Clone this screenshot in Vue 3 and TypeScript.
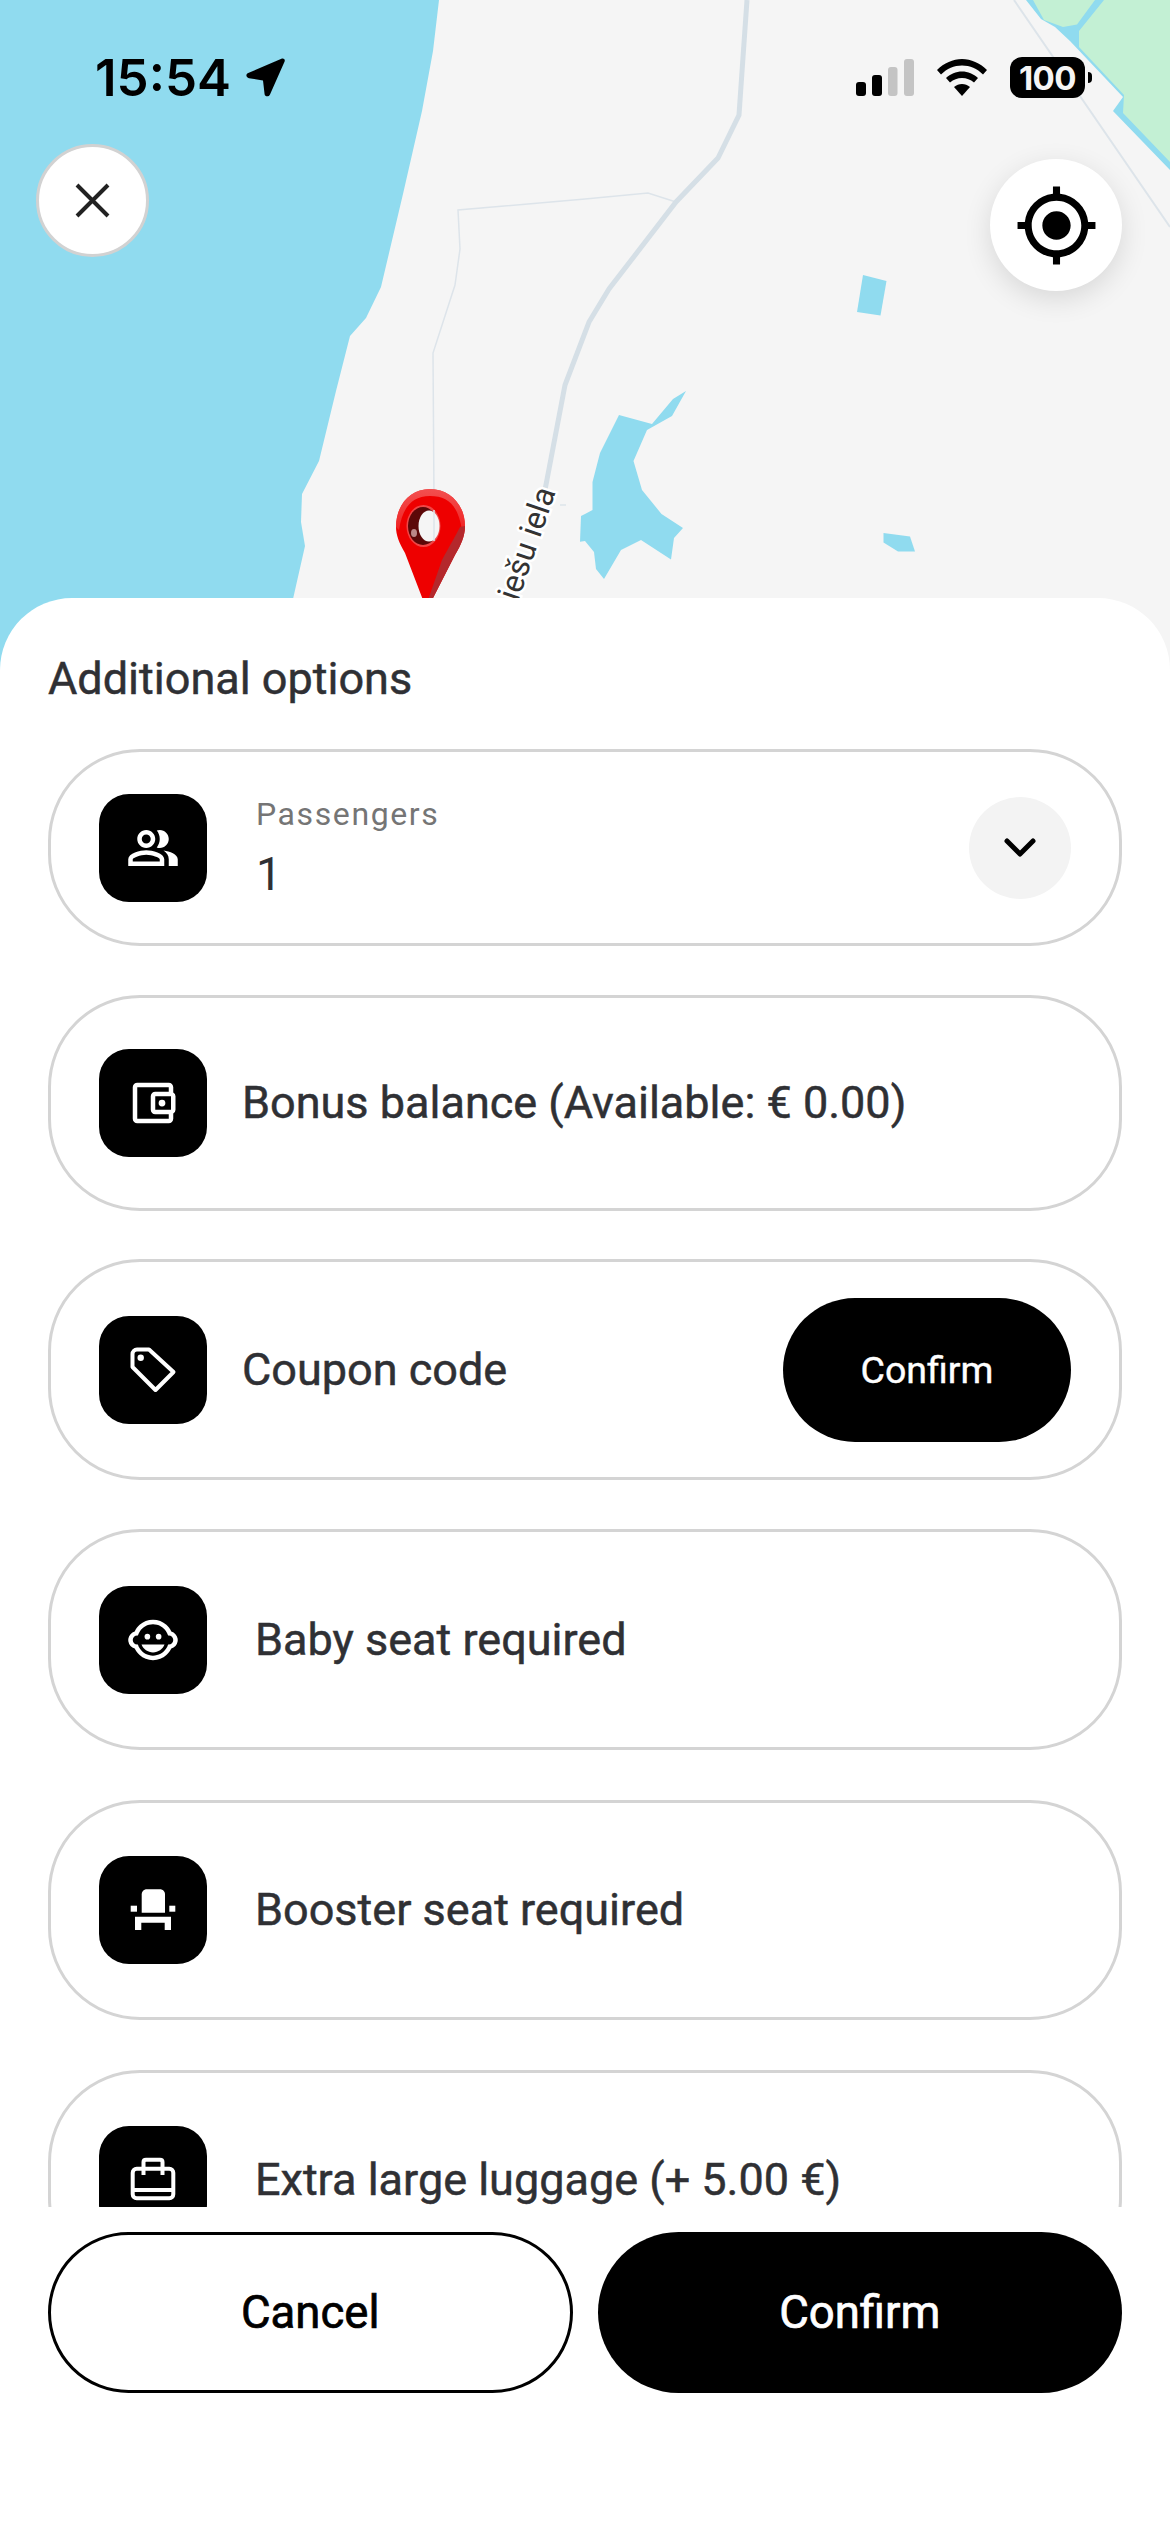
<script setup lang="ts">
const title: string = 'Additional options'
</script>

<template>
  <div class="screen">
    <svg class="map" width="1170" height="700" viewBox="0 0 1170 700">
      <defs>
        <linearGradient id="pinTop" x1="0" y1="0" x2="0" y2="1">
          <stop offset="0" stop-color="#f46a6a" />
          <stop offset="1" stop-color="#ef2f2f" />
        </linearGradient>
      </defs>
      <rect width="1170" height="700" fill="#f5f5f5" />
      <polygon fill="#90dbef" points="0,0 439,0 433,51 422,111 403,194 381,287 366,318 350,336 336,391 319,461 302,494 301,522 305,546 293,599 280,700 0,700" />
      <polygon fill="#90dbef" points="619,415 652,424 673,399 686,391 672,416 647,430 633.5,461 642,490 661.5,514 683,528 674,538 671,559.5 641,540 621,550 604,579 596,569 594,552 585,541 580,541.7 581,516 585,514 592.5,510 592.5,482 600,453" />
      <polygon fill="#90dbef" points="863,275 886.5,281 880.5,315.5 857,312" />
      <polygon fill="#90dbef" points="883.5,533 910,536.6 915,551.6 898,551.6 883.5,542.5" />
      <line x1="1014" y1="0" x2="1170" y2="227" stroke="#dde4ea" stroke-width="2" />
      <polygon fill="#90dbef" points="1026,0 1041,19 1055,27 1070,41 1123,97 1113,111 1170,170 1170,0" />
      <polygon fill="#c3f0d4" points="1033,0 1044,20 1063,27 1077,24.5 1095,0" />
      <polygon fill="#c3f0d4" points="1104,0 1079,31 1079,47 1124,95 1123,113 1170,162 1170,0" />
      <polyline fill="none" stroke="#dde4ea" stroke-width="1.5" points="585,199 648,193 676,202" />
      <polyline fill="none" stroke="#dde4ea" stroke-width="1.5" points="585,199 458,210 460,249 455,285 433,353 434,500" />
      <polyline fill="none" stroke="#d5dfe6" stroke-width="5" points="747,0 739,115 718,158 676,202 609,289 589,322 565,385 545,490" />
      <line x1="560" y1="505" x2="566" y2="505" stroke="#dde4ea" stroke-width="1.5" />
      <text class="street" x="518" y="602" transform="rotate(-71 518 602)">iešu iela</text>

      <path fill="#ee0000" d="M430 489C450 489 465 505 465 526C465 536 461 545 455 555L432 600H423L405 553C399 543 396 535 396 527C396 505 410 489 430 489Z" />
      <path fill="url(#pinTop)" d="M396 527C396 505 410 489 430 489C450 489 465 505 465 526L462 530C458 505 448 496 430 496C410 496 402 510 399 530Z" opacity=".75" />
      <path fill="#b4282c" d="M465 526C465 536 461 545 455 555L432 600H428L442 560C450 545 456 535 460 527Z" />
      <ellipse cx="423.5" cy="526" rx="17" ry="21" fill="#f04646" />
      <ellipse cx="423" cy="526" rx="15" ry="19" fill="#5c0808" />
      <ellipse cx="429" cy="526" rx="10.5" ry="15.5" fill="#f5f5f5" />
      <line x1="434" y1="510" x2="434" y2="541" stroke="#dde4ea" stroke-width="1.5" />
      <ellipse cx="414" cy="533" rx="3" ry="4" fill="#b88" />
    </svg>

    <header class="head">
      <div class="status">
        <div class="status-left">
          <span class="time">15:54</span>
          <svg class="arrow" width="39" height="39" viewBox="0 0 39 39">
            <path d="M36 .5C38 .2 39.3 1.5 38.6 3.6L24 36.5C23 39 19 39 18.6 36.3L17 22.4 3 20.2C.3 19.6-.6 16.6 1.6 15.3Z" fill="#000" />
          </svg>
        </div>
        <div class="status-right">
          <svg width="58" height="38" viewBox="0 0 58 38">
            <rect x="0" y="23" width="10" height="14" rx="3" fill="#000" />
            <rect x="16" y="16" width="10" height="21" rx="3" fill="#000" />
            <rect x="32" y="8" width="9.500" height="29" rx="3" fill="#c4c4c4" />
            <rect x="48" y="0" width="10" height="37" rx="3" fill="#c4c4c4" />
          </svg>
          <svg width="50" height="38" viewBox="0 0 50 38">
            <path fill="#000" d="M25 0C34 0 43 4 50 11L46 15.500C40 9.500 33 6.500 25 6.500S10 9.500 4 15.500L0 11C7 4 16 0 25 0Z" />
            <path fill="#000" d="M25 12.500C31 12.500 36.500 15 41 19L37 23.500C33.500 20.500 29.500 19 25 19S16.500 20.500 13 23.500L9 19C13.500 15 19 12.500 25 12.500Z" />
            <path fill="#000" d="M25 25C28 25 30.500 26 33 28L25 37 17 28C19.500 26 22 25 25 25Z" />
          </svg>
          <div class="battery">
            <span class="battery-body">100</span>
            <span class="battery-tip"></span>
          </div>
        </div>
      </div>
      <div class="controls">
        <button class="close" type="button" aria-label="Close">
          <svg width="35" height="35" viewBox="0 0 35 35">
            <path d="M2 2L33 33M33 2L2 33" stroke="#222" stroke-width="4" fill="none" />
          </svg>
        </button>
        <button class="locate" type="button" aria-label="Locate">
          <svg width="85" height="85" viewBox="0 0 24 24">
            <path fill="#000" d="M12 8c-2.210 0-4 1.790-4 4s1.790 4 4 4 4-1.790 4-4-1.790-4-4-4zm8.940 3A8.994 8.994 0 0 0 13 3.060V1h-2v2.060A8.994 8.994 0 0 0 3.060 11H1v2h2.060A8.994 8.994 0 0 0 11 20.940V23h2v-2.060A8.994 8.994 0 0 0 20.940 13H23v-2h-2.060zM12 19c-3.870 0-7-3.130-7-7s3.130-7 7-7 7 3.130 7 7-3.130 7-7 7z" />
          </svg>
        </button>
      </div>
    </header>

    <section class="sheet">
      <h2 class="title">{{ title }}</h2>
      <div class="scroll">
        <div class="row row-passengers">
          <span class="tile">
            <svg width="54" height="54" viewBox="0 0 24 24">
              <path fill="#fff" d="M16.670 13.130C18.040 14.060 19 15.320 19 17v3h4v-3c0-2.180-3.570-3.470-6.330-3.870zM15 12c2.210 0 4-1.790 4-4s-1.790-4-4-4c-.470 0-.910.100-1.330.240C14.500 5.270 15 6.580 15 8s-.500 2.730-1.330 3.760c.420.140.860.240 1.330.240zM9 12c2.210 0 4-1.790 4-4s-1.790-4-4-4-4 1.790-4 4 1.790 4 4 4zm0-6c1.100 0 2 .900 2 2s-.900 2-2 2-2-.900-2-2 .900-2 2-2zM9 13c-2.670 0-8 1.340-8 4v3h16v-3c0-2.660-5.330-4-8-4zm6 5H3v-.990C3.200 16.290 6.300 15 9 15s5.800 1.290 6 2v1z" />
            </svg>
          </span>
          <div class="stack">
            <span class="label">Passengers</span>
            <span class="value">1</span>
          </div>
          <span class="chevron">
            <svg width="34" height="22" viewBox="0 0 34 22">
              <path d="M4 4L17 17L30 4" fill="none" stroke="#000" stroke-width="5" stroke-linecap="round" stroke-linejoin="round" />
            </svg>
          </span>
        </div>

        <div class="row row-bonus">
          <span class="tile">
            <svg width="54" height="54" viewBox="0 0 24 24">
              <path fill="#fff" d="M21 7.280V5c0-1.100-.900-2-2-2H5a2 2 0 0 0-2 2v14a2 2 0 0 0 2 2h14c1.100 0 2-.900 2-2v-2.280A2 2 0 0 0 22 15V9a2 2 0 0 0-1-1.720zM20 9v6h-7V9h7zM5 19V5h14v2h-6c-1.100 0-2 .900-2 2v6c0 1.100.900 2 2 2h6v2H5z" />
              <circle cx="16" cy="12" r="1.500" fill="#fff" />
            </svg>
          </span>
          <span class="text near">Bonus balance (Available: € 0.00)</span>
        </div>

        <div class="row row-coupon">
          <span class="tile">
            <svg width="108" height="108" viewBox="0 0 108 108">
              <path d="M33.500 38C33.500 35.500 35.500 33.500 38 33.500H50L74.500 56L56.500 74L33.500 51Z" fill="none" stroke="#fff" stroke-width="4" stroke-linejoin="round" />
              <circle cx="41.700" cy="41.700" r="3.200" fill="#fff" />
            </svg>
          </span>
          <span class="text near">Coupon code</span>
          <button class="mini" type="button">Confirm</button>
        </div>

        <div class="row row-baby">
          <span class="tile">
            <svg width="54" height="54" viewBox="0 0 24 24">
              <circle cx="14.500" cy="10.500" r="1.250" fill="#fff" />
              <circle cx="9.500" cy="10.500" r="1.250" fill="#fff" />
              <path fill="#fff" d="M12 17.500c2.330 0 4.310-1.460 5.110-3.500H6.890c.800 2.040 2.780 3.500 5.110 3.500z" />
              <path fill="#fff" d="M22.940 11.340c-.250-1.510-1.360-2.740-2.810-3.170-.530-1.120-1.280-2.100-2.190-2.910C16.360 3.850 14.280 3 12 3s-4.360.850-5.940 2.260c-.920.810-1.670 1.800-2.190 2.910-1.450.430-2.560 1.650-2.810 3.170-.040.210-.060.430-.060.660 0 .230.020.450.060.660.250 1.510 1.360 2.740 2.810 3.170.520 1.110 1.270 2.090 2.170 2.890C7.620 20.140 9.710 21 12 21s4.380-.860 5.970-2.280c.900-.800 1.650-1.790 2.170-2.890 1.440-.430 2.550-1.650 2.800-3.170.040-.210.060-.430.060-.660 0-.230-.020-.450-.060-.660zM19 14c-.100 0-.190-.020-.290-.030-.200.670-.490 1.290-.860 1.860C16.600 17.740 14.450 19 12 19s-4.600-1.260-5.850-3.170c-.370-.570-.660-1.190-.860-1.860-.100.010-.190.030-.290.030-1.100 0-2-.900-2-2s.900-2 2-2c.100 0 .190.020.290.030.200-.670.490-1.290.860-1.860C7.400 6.260 9.550 5 12 5s4.600 1.260 5.850 3.170c.370.570.660 1.190.860 1.860.100-.010.190-.030.290-.030 1.100 0 2 .900 2 2s-.900 2-2 2z" />
            </svg>
          </span>
          <span class="text far">Baby seat required</span>
        </div>

        <div class="row row-booster">
          <span class="tile">
            <svg width="108" height="108" viewBox="0 0 108 108">
              <path fill="#fff" d="M42.700 38.300C42.700 35.500 45 33.300 47.700 33.300H61C63.800 33.300 66 35.500 66 38.300V56.700H42.700Z" />
              <rect x="31.700" y="49.700" width="6.300" height="6" fill="#fff" />
              <rect x="70.300" y="49.700" width="6" height="6" fill="#fff" />
              <path fill="#fff" d="M36 60.700H72V74H65.700V66.700H42.300V74H36Z" />
            </svg>
          </span>
          <span class="text far">Booster seat required</span>
        </div>

        <div class="row row-luggage">
          <span class="tile">
            <svg width="108" height="108" viewBox="0 0 108 108">
              <rect x="33.700" y="42.700" width="40.600" height="29.500" rx="4" fill="none" stroke="#fff" stroke-width="4" />
              <path d="M44.500 49V36C44.500 34.500 45.500 33.700 47 33.700H61C62.500 33.700 63.500 34.500 63.500 36V49" fill="none" stroke="#fff" stroke-width="4" />
              <path d="M34 64H74" stroke="#fff" stroke-width="4" />
            </svg>
          </span>
          <span class="text far">Extra large luggage (+ 5.00 €)</span>
        </div>
      </div>

      <div class="actions">
        <button class="action cancel" type="button">Cancel</button>
        <button class="action confirm" type="button">Confirm</button>
      </div>
    </section>
  </div>
</template>

<style scoped>
.screen {
  position: relative;
  width: 1170px;
  height: 2532px;
  overflow: hidden;
  background: #fff;
  font-family: Roboto, "Liberation Sans", sans-serif;
  color: #2f3034;
}
.map {
  position: absolute;
  left: 0;
  top: 0;
}
.street {
  font-family: Roboto, sans-serif;
  font-size: 32px;
  fill: #333;
  stroke: #fff;
  stroke-width: 5px;
  paint-order: stroke;
}
.head {
  position: relative;
  height: 598px;
}
.status {
  display: flex;
  justify-content: space-between;
  align-items: center;
  height: 41px;
  padding: 57px 78px 0 95px;
}
.status-left {
  display: flex;
  align-items: center;
  gap: 15px;
}
.time {
  font-family: Inter, sans-serif;
  font-weight: 600;
  font-size: 51px;
  line-height: 41px;
  color: #000;
}
.status-right {
  display: flex;
  align-items: center;
  gap: 23px;
}
.battery {
  display: flex;
  align-items: center;
  gap: 3px;
}
.battery-body {
  display: flex;
  align-items: center;
  justify-content: center;
  width: 75px;
  height: 41px;
  border-radius: 12px;
  background: #000;
  color: #f5f5f5;
  font-family: Inter, sans-serif;
  font-weight: 700;
  font-size: 33px;
  letter-spacing: -0.5px;
}
.battery-tip {
  width: 4px;
  height: 11px;
  border-radius: 0 6px 6px 0;
  background: #000;
}
.controls {
  display: flex;
  justify-content: space-between;
  align-items: flex-start;
  margin-top: 46px;
  padding: 0 48px 0 36px;
}
.close {
  display: flex;
  align-items: center;
  justify-content: center;
  width: 113px;
  height: 113px;
  padding: 0;
  border: 3px solid #d2d2d2;
  border-radius: 50%;
  background: #fff;
}
.locate {
  display: flex;
  align-items: center;
  justify-content: center;
  width: 132px;
  height: 132px;
  margin-top: 15px;
  padding: 0;
  border: 0;
  border-radius: 50%;
  background: #fff;
  box-shadow: 0 8px 28px rgba(0, 0, 0, 0.12);
}
.sheet {
  position: relative;
  height: 1934px;
  box-sizing: border-box;
  padding: 0 48px;
  border-radius: 72px 72px 0 0;
  background: #fff;
}
.title {
  margin: 0;
  padding: 56px 0 45px;
  font-size: 45px;
  line-height: 50px;
  font-weight: 400;
  -webkit-text-stroke: 0.5px currentColor;
}
.scroll {
  height: 1458px;
  overflow: hidden;
}
.row {
  display: flex;
  align-items: center;
  box-sizing: border-box;
  padding: 0 48px;
  border: 3px solid #d4d4d4;
  border-radius: 92px;
}
.row-passengers { height: 197px; margin-bottom: 49px; }
.row-bonus { height: 216px; margin-bottom: 48px; }
.row-coupon { height: 221px; margin-bottom: 49px; }
.row-baby { height: 221px; margin-bottom: 50px; }
.row-booster { height: 220px; margin-bottom: 50px; }
.row-luggage { height: 220px; }
.tile {
  display: flex;
  flex: none;
  align-items: center;
  justify-content: center;
  width: 108px;
  height: 108px;
  border-radius: 30px;
  background: #000;
}
.text {
  font-size: 45px;
  line-height: 54px;
  font-weight: 400;
  white-space: nowrap;
  -webkit-text-stroke: 0.5px currentColor;
}
.near { margin-left: 35px; }
.far { margin-left: 48px; }
.stack {
  display: flex;
  flex-direction: column;
  flex: 1;
  margin-left: 49px;
}
.label {
  font-size: 32px;
  line-height: 38px;
  letter-spacing: 1.6px;
  color: #757575;
}
.value {
  margin-top: 14px;
  font-size: 46px;
  line-height: 54px;
}
.chevron {
  display: flex;
  align-items: center;
  justify-content: center;
  width: 102px;
  height: 102px;
  border-radius: 50%;
  background: #f3f3f3;
}
.mini {
  width: 288px;
  height: 144px;
  margin-left: auto;
  padding: 0;
  border: 0;
  border-radius: 72px;
  background: #000;
  color: #fff;
  font-family: Roboto, sans-serif;
  font-size: 37.5px;
  font-weight: 400;
  -webkit-text-stroke: 0.4px currentColor;
}
.actions {
  display: grid;
  grid-template-columns: 1fr 1fr;
  gap: 25px;
  margin-top: 25px;
}
.action {
  height: 161px;
  box-sizing: border-box;
  padding: 0;
  border-radius: 81px;
  font-family: Roboto, sans-serif;
  font-size: 45.5px;
  font-weight: 400;
  -webkit-text-stroke: 0.7px currentColor;
}
.cancel {
  border: 3px solid #000;
  background: #fff;
  color: #000;
}
.confirm {
  border: 0;
  background: #000;
  color: #fff;
}
</style>
